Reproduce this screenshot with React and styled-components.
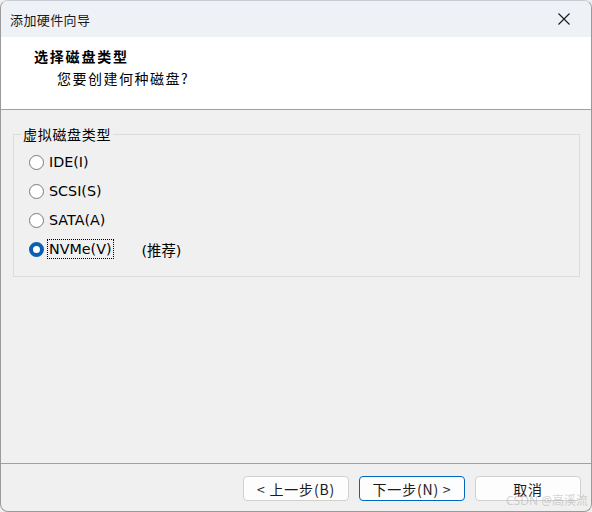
import React from "react";
import styled, { createGlobalStyle } from "styled-components";

const Global = createGlobalStyle`
  html, body { margin: 0; padding: 0; background: #f0f0f0; }
  body { font-family: "Noto Sans", "Noto Sans CJK SC", sans-serif; }
  * { box-sizing: border-box; }
`;

const Window = styled.div`
  position: relative;
  width: 592px;
  height: 512px;
  display: flex;
  flex-direction: column;
  border: 1px solid #9a9a9a;
  border-top-color: #c8ccd2;
  border-radius: 8px;
  overflow: hidden;
  background: #f0f0f0;
`;

const TitleBar = styled.div`
  height: 36px;
  flex: none;
  display: flex;
  align-items: center;
  justify-content: space-between;
  background: #eef2f7;
  padding: 0 12px 0 9px;
  font-family: "Noto Sans CJK SC", sans-serif;
  font-size: 13px;
  letter-spacing: 0.4px;
  color: #1a1a1a;
`;

const CloseBtn = styled.div`
  width: 30px;
  display: flex;
  justify-content: center;
  align-items: center;
`;

const Header = styled.div`
  height: 73px;
  flex: none;
  background: #ffffff;
  border-bottom: 1px solid #a0a0a0;
  padding: 10px 0 0 33px;
  font-family: "Noto Sans CJK SC", sans-serif;
  color: #000;
`;

const HeaderTitle = styled.div`
  font-size: 14px;
  font-weight: 700;
  letter-spacing: 1.8px;
  line-height: 18px;
`;

const HeaderSub = styled.div`
  font-size: 14px;
  letter-spacing: 1.5px;
  line-height: 18px;
  margin: 4px 0 0 23px;
`;

const Body = styled.div`
  flex: 1;
  padding: 14px 11px 0 12px;
`;

const Group = styled.fieldset`
  margin: 0;
  border: 1px solid #dcdcdc;
  padding: 9px 0 14px 15px;
  height: 153px;
  display: flex;
  flex-direction: column;
  gap: 11px;
`;

const Legend = styled.legend`
  padding: 0 2px;
  margin-left: -8px;
  font-family: "Noto Sans CJK SC", sans-serif;
  font-size: 14px;
  letter-spacing: 0.7px;
  color: #000;
`;

const OptionRow = styled.label`
  display: flex;
  align-items: center;
  height: 18px;
  font-family: "DejaVu Sans", "Noto Sans CJK SC", sans-serif;
  font-size: 14.3px;
  color: #000;
`;

const Radio = styled.span`
  width: 15px;
  height: 15px;
  border-radius: 50%;
  flex: none;
  margin-right: 4px;
  border: ${(p) => (p.$checked ? "4px solid #0a5fb4" : "1px solid #7a7a7a")};
  background: #fff;
`;

const OptionText = styled.span`
  padding: 0 1px;
  outline: ${(p) => (p.$focus ? "1px dotted #000" : "none")};
  line-height: 18px;
`;

const Note = styled.span`
  margin-left: 29px;
  font-family: "DejaVu Sans", "Noto Sans CJK SC", sans-serif;
`;

const Footer = styled.div`
  height: 48px;
  flex: none;
  border-top: 1px solid #a0a0a0;
  display: flex;
  justify-content: flex-end;
  align-items: flex-start;
  padding: 12px 10px 0 0;
  gap: 10px;
`;

const Button = styled.button`
  width: 106px;
  height: 25px;
  border-radius: 4px;
  border: 1px solid ${(p) => (p.$primary ? "#0067c0" : "#d0d0d0")};
  background: #fdfdfd;
  font-family: "Noto Sans CJK SC", sans-serif;
  font-size: 14px;
  letter-spacing: 0.8px;
  color: #1a1a1a;
  padding: 0;
  display: flex;
  align-items: center;
  justify-content: center;
`;

const Watermark = styled.div`
  position: absolute;
  right: 3px;
  bottom: 2px;
  font-family: "Noto Sans", "Noto Sans CJK SC", sans-serif;
  font-size: 12px;
  color: rgba(170, 170, 170, 0.5);
  pointer-events: none;
`;

const options = [
  { label: "IDE(I)" },
  { label: "SCSI(S)" },
  { label: "SATA(A)" },
  { label: "NVMe(V)", checked: true, note: "(推荐)" },
];

export default function App() {
  return (
    <>
      <Global />
      <Window>
        <TitleBar>
          <span>添加硬件向导</span>
          <CloseBtn>
            <svg width="12" height="12" viewBox="0 0 12 12">
              <path d="M0.5 0.5 L11.5 11.5 M11.5 0.5 L0.5 11.5" stroke="#1a1a1a" strokeWidth="1.1" />
            </svg>
          </CloseBtn>
        </TitleBar>
        <Header>
          <HeaderTitle>选择磁盘类型</HeaderTitle>
          <HeaderSub>您要创建何种磁盘?</HeaderSub>
        </Header>
        <Body>
          <Group>
            <Legend>虚拟磁盘类型</Legend>
            {options.map((o) => (
              <OptionRow key={o.label}>
                <Radio $checked={o.checked} />
                <OptionText $focus={o.checked}>{o.label}</OptionText>
                {o.note && <Note>{o.note}</Note>}
              </OptionRow>
            ))}
          </Group>
        </Body>
        <Footer>
          <Button>&lt; 上一步(B)</Button>
          <Button $primary>下一步(N) &gt;</Button>
          <Button>取消</Button>
        </Footer>
        <Watermark>CSDN @高溪流</Watermark>
      </Window>
    </>
  );
}
